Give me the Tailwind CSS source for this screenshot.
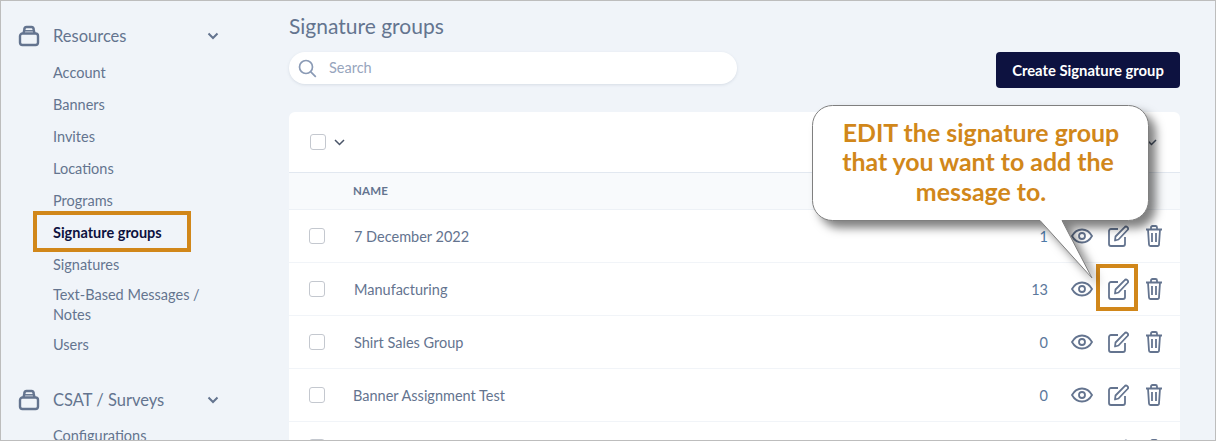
<!DOCTYPE html>
<html lang="en">
  <head>
    <meta charset="UTF-8" />
    <title>Signature groups</title>
    <script src="https://cdn.jsdelivr.net/npm/@tailwindcss/browser@4"></script>
  </head>
  <body class="bg-[#f0f4f9] font-['Lato',sans-serif] text-[#64748f] overflow-hidden">
    <div class="relative w-[1216px] h-[441px] overflow-hidden border border-[#bdbdbd] flex">
      <!-- sidebar -->
      <aside class="w-[288px] shrink-0 pl-[17px] pt-[21px]">
        <div class="flex items-center h-[28px] w-[201px]">
          <svg class="w-[22px] h-[22px]" viewBox="0 0 22 22" fill="none" stroke="#64748f" stroke-width="2.4" stroke-linejoin="round"><path d="M2 11 A2.500 2.500 0 0 1 4.500 8.500 H17.500 A2.500 2.500 0 0 1 20 11 V17.500 A2.500 2.500 0 0 1 17.500 20 H4.500 A2.500 2.500 0 0 1 2 17.500 Z"/><path d="M5.500 8.500 L6.500 3.800 A2 2 0 0 1 8.500 2 H13.500 A2 2 0 0 1 15.500 3.800 L16.500 8.500"/><path d="M6 5.800 H16" stroke-width="1.500"/></svg>
          <span class="ml-[13px] text-[16.5px] flex-1">Resources</span>
          <svg class="w-[12px] h-[8px]" viewBox="0 0 12 8" fill="none" stroke="#64748f" stroke-width="2"><path d="M1.500 1.500 6 6l4.500-4.500"/></svg>
        </div>
        <nav class="ml-[35px] mt-[7px] text-[14.5px] leading-[20px]">
          <a class="block py-[6px]">Account</a>
          <a class="block py-[6px]">Banners</a>
          <a class="block py-[6px]">Invites</a>
          <a class="block py-[6px]">Locations</a>
          <a class="block py-[6px]">Programs</a>
          <a class="block py-[6px] font-bold text-[#0d1240]">Signature groups</a>
          <a class="block py-[6px]">Signatures</a>
          <a class="block pt-[4px] pb-[5px] w-[170px]">Text-Based Messages / Notes</a>
          <a class="block py-[5px]">Users</a>
        </nav>
        <div class="flex items-center h-[28px] w-[201px] mt-[26px]">
          <svg class="w-[22px] h-[22px]" viewBox="0 0 22 22" fill="none" stroke="#64748f" stroke-width="2.4" stroke-linejoin="round"><path d="M2 11 A2.500 2.500 0 0 1 4.500 8.500 H17.500 A2.500 2.500 0 0 1 20 11 V17.500 A2.500 2.500 0 0 1 17.500 20 H4.500 A2.500 2.500 0 0 1 2 17.500 Z"/><path d="M5.500 8.500 L6.500 3.800 A2 2 0 0 1 8.500 2 H13.500 A2 2 0 0 1 15.500 3.800 L16.500 8.500"/><path d="M6 5.800 H16" stroke-width="1.500"/></svg>
          <span class="ml-[13px] text-[16.5px] flex-1">CSAT / Surveys</span>
          <svg class="w-[12px] h-[8px]" viewBox="0 0 12 8" fill="none" stroke="#64748f" stroke-width="2"><path d="M1.500 1.500 6 6l4.500-4.500"/></svg>
        </div>
        <a class="block ml-[35px] mt-[12px] text-[14.5px] leading-[20px]">Configurations</a>
      </aside>

      <!-- main -->
      <main class="w-[891px] shrink-0">
        <h1 class="text-[21px] leading-[26px] mt-[12px]">Signature groups</h1>
        <div class="flex justify-between items-start mt-[13px]">
          <div class="w-[448px] h-[32px] bg-white rounded-full shadow-[0_1px_3px_rgba(100,116,143,0.18)] flex items-center pl-[9px]">
            <svg class="w-[19px] h-[19px]" viewBox="0 0 19 19" fill="none" stroke="#8a9ab5" stroke-width="1.700"><circle cx="8" cy="8" r="6.500"/><path d="m12.800 12.800 5 5"/></svg>
            <span class="ml-[12px] text-[14.5px] text-[#97a5bd]">Search</span>
          </div>
          <button class="w-[184px] h-[36px] bg-[#0d1240] rounded-[4px] text-white text-[14.8px] font-bold">Create Signature group</button>
        </div>
        <section class="mt-[24px] bg-white rounded-t-[6px] h-[340px] overflow-hidden">
          <div class="h-[61px] flex items-center pl-[21px] pr-[23px] border-b border-[#e2e8f0]">
            <span class="w-[16px] h-[16px] border border-[#c4c8cf] rounded-[3px]"></span>
            <svg class="ml-[8px] w-[11px] h-[7px]" viewBox="0 0 11 7" fill="none" stroke="#4a5568" stroke-width="1.500"><path d="M1 1l4.500 4.500L10 1"/></svg>
            <span class="flex-1"></span>
            <svg class="w-[11px] h-[7px]" viewBox="0 0 11 7" fill="none" stroke="#4a5568" stroke-width="1.500"><path d="M1 1l4.500 4.500L10 1"/></svg>
          </div>
          <div class="h-[37px] bg-[#f8fafc] border-b border-[#edf1f6] flex items-center pl-[64px] text-[11.500px] font-bold tracking-[0.2px]">NAME</div>
          <div class="h-[53px] border-b border-[#f1f4f8] flex items-center pl-[20px] pr-[17px] text-[14.5px]">
            <span class="w-[16px] h-[16px] border border-[#c4c8cf] rounded-[3px]"></span>
            <span class="ml-[29px] pt-[2px] flex-1">7 December 2022</span>
            <span class="pt-[2px] text-[#4d7aa8]">1</span>
            <svg class="ml-[23px] w-[22px] h-[22px]" viewBox="0 0 22 22" fill="none" stroke="#64748f" stroke-width="1.800"><path d="M1 11c2.500-4.500 6-6.500 10-6.500S18.500 6.500 21 11c-2.500 4.500-6 6.500-10 6.500S3.500 15.500 1 11Z"/><circle cx="11" cy="11" r="3"/></svg>
            <svg class="ml-[15px] w-[21px] h-[22px]" viewBox="0 0 21 22" fill="none" stroke="#64748f" stroke-width="1.800" stroke-linejoin="round"><path d="M10 4H3a2 2 0 0 0-2 2v13a2 2 0 0 0 2 2h12a2 2 0 0 0 2-2v-7"/><path d="M7.500 11.500 16.500 2.300a1.800 1.800 0 0 1 3 2.700L10.500 14.500 7 15.500Z"/></svg>
            <svg class="ml-[16px] w-[18px] h-[22px]" viewBox="0 0 18 22" fill="none" stroke="#64748f" stroke-width="1.800" stroke-linejoin="round"><path d="M1 4.500h16M6 4.500V2.500a1.500 1.500 0 0 1 1.500-1.500h3A1.500 1.500 0 0 1 12 2.500v2M3 4.500l1 15a1.500 1.500 0 0 0 1.500 1.500h7a1.500 1.500 0 0 0 1.500-1.500l1-15M7 8v9M11 8v9"/></svg>
          </div>
          <div class="h-[53px] border-b border-[#f1f4f8] flex items-center pl-[20px] pr-[17px] text-[14.5px]">
            <span class="w-[16px] h-[16px] border border-[#c4c8cf] rounded-[3px]"></span>
            <span class="ml-[29px] pt-[2px] flex-1">Manufacturing</span>
            <span class="pt-[2px] text-[#5b789b]">13</span>
            <svg class="ml-[23px] w-[22px] h-[22px]" viewBox="0 0 22 22" fill="none" stroke="#64748f" stroke-width="1.800"><path d="M1 11c2.500-4.500 6-6.500 10-6.500S18.500 6.500 21 11c-2.500 4.500-6 6.500-10 6.500S3.500 15.500 1 11Z"/><circle cx="11" cy="11" r="3"/></svg>
            <svg class="ml-[15px] w-[21px] h-[22px]" viewBox="0 0 21 22" fill="none" stroke="#64748f" stroke-width="1.800" stroke-linejoin="round"><path d="M10 4H3a2 2 0 0 0-2 2v13a2 2 0 0 0 2 2h12a2 2 0 0 0 2-2v-7"/><path d="M7.500 11.500 16.500 2.300a1.800 1.800 0 0 1 3 2.700L10.500 14.500 7 15.500Z"/></svg>
            <svg class="ml-[16px] w-[18px] h-[22px]" viewBox="0 0 18 22" fill="none" stroke="#64748f" stroke-width="1.800" stroke-linejoin="round"><path d="M1 4.500h16M6 4.500V2.500a1.500 1.500 0 0 1 1.500-1.500h3A1.500 1.500 0 0 1 12 2.500v2M3 4.500l1 15a1.500 1.500 0 0 0 1.500 1.500h7a1.500 1.500 0 0 0 1.500-1.500l1-15M7 8v9M11 8v9"/></svg>
          </div>
          <div class="h-[53px] border-b border-[#f1f4f8] flex items-center pl-[20px] pr-[17px] text-[14.5px]">
            <span class="w-[16px] h-[16px] border border-[#c4c8cf] rounded-[3px]"></span>
            <span class="ml-[29px] pt-[2px] flex-1">Shirt Sales Group</span>
            <span class="pt-[2px] text-[#5b789b]">0</span>
            <svg class="ml-[23px] w-[22px] h-[22px]" viewBox="0 0 22 22" fill="none" stroke="#64748f" stroke-width="1.800"><path d="M1 11c2.500-4.500 6-6.500 10-6.500S18.500 6.500 21 11c-2.500 4.500-6 6.500-10 6.500S3.500 15.500 1 11Z"/><circle cx="11" cy="11" r="3"/></svg>
            <svg class="ml-[15px] w-[21px] h-[22px]" viewBox="0 0 21 22" fill="none" stroke="#64748f" stroke-width="1.800" stroke-linejoin="round"><path d="M10 4H3a2 2 0 0 0-2 2v13a2 2 0 0 0 2 2h12a2 2 0 0 0 2-2v-7"/><path d="M7.500 11.500 16.500 2.300a1.800 1.800 0 0 1 3 2.700L10.500 14.500 7 15.500Z"/></svg>
            <svg class="ml-[16px] w-[18px] h-[22px]" viewBox="0 0 18 22" fill="none" stroke="#64748f" stroke-width="1.800" stroke-linejoin="round"><path d="M1 4.500h16M6 4.500V2.500a1.500 1.500 0 0 1 1.500-1.500h3A1.500 1.500 0 0 1 12 2.500v2M3 4.500l1 15a1.500 1.500 0 0 0 1.500 1.500h7a1.500 1.500 0 0 0 1.500-1.500l1-15M7 8v9M11 8v9"/></svg>
          </div>
          <div class="h-[53px] border-b border-[#f1f4f8] flex items-center pl-[20px] pr-[17px] text-[14.5px]">
            <span class="w-[16px] h-[16px] border border-[#c4c8cf] rounded-[3px]"></span>
            <span class="ml-[28px] pt-[2px] flex-1">Banner Assignment Test</span>
            <span class="pt-[2px] text-[#5b789b]">0</span>
            <svg class="ml-[23px] w-[22px] h-[22px]" viewBox="0 0 22 22" fill="none" stroke="#64748f" stroke-width="1.800"><path d="M1 11c2.500-4.500 6-6.500 10-6.500S18.500 6.500 21 11c-2.500 4.500-6 6.500-10 6.500S3.500 15.500 1 11Z"/><circle cx="11" cy="11" r="3"/></svg>
            <svg class="ml-[15px] w-[21px] h-[22px]" viewBox="0 0 21 22" fill="none" stroke="#64748f" stroke-width="1.800" stroke-linejoin="round"><path d="M10 4H3a2 2 0 0 0-2 2v13a2 2 0 0 0 2 2h12a2 2 0 0 0 2-2v-7"/><path d="M7.500 11.500 16.500 2.300a1.800 1.800 0 0 1 3 2.700L10.500 14.500 7 15.500Z"/></svg>
            <svg class="ml-[16px] w-[18px] h-[22px]" viewBox="0 0 18 22" fill="none" stroke="#64748f" stroke-width="1.800" stroke-linejoin="round"><path d="M1 4.500h16M6 4.500V2.500a1.500 1.500 0 0 1 1.500-1.500h3A1.500 1.500 0 0 1 12 2.500v2M3 4.500l1 15a1.500 1.500 0 0 0 1.500 1.500h7a1.500 1.500 0 0 0 1.500-1.500l1-15M7 8v9M11 8v9"/></svg>
          </div>
          <div class="h-[53px] flex items-start pl-[20px] pr-[17px] pt-[17px]">
            <span class="w-[16px] h-[16px] border border-[#c4c8cf] rounded-[3px]"></span>
            <span class="flex-1"></span>
            <svg class="w-[22px] h-[22px]" viewBox="0 0 22 22" fill="none" stroke="#64748f" stroke-width="1.800"><path d="M1 11c2.500-4.500 6-6.500 10-6.500S18.500 6.500 21 11c-2.500 4.500-6 6.500-10 6.500S3.500 15.500 1 11Z"/><circle cx="11" cy="11" r="3"/></svg>
            <svg class="ml-[15px] w-[21px] h-[22px]" viewBox="0 0 21 22" fill="none" stroke="#64748f" stroke-width="1.800" stroke-linejoin="round"><path d="M10 4H3a2 2 0 0 0-2 2v13a2 2 0 0 0 2 2h12a2 2 0 0 0 2-2v-7"/><path d="M7.500 11.500 16.500 2.300a1.800 1.800 0 0 1 3 2.700L10.500 14.500 7 15.500Z"/></svg>
            <svg class="ml-[16px] w-[18px] h-[22px]" viewBox="0 0 18 22" fill="none" stroke="#64748f" stroke-width="1.800" stroke-linejoin="round"><path d="M1 4.500h16M6 4.500V2.500a1.500 1.500 0 0 1 1.500-1.500h3A1.500 1.500 0 0 1 12 2.500v2M3 4.500l1 15a1.500 1.500 0 0 0 1.500 1.500h7a1.500 1.500 0 0 0 1.500-1.500l1-15M7 8v9M11 8v9"/></svg>
          </div>
        </section>
      </main>

      <!-- highlights and callout lying over the page -->
      <div class="absolute left-[32px] top-[210px] w-[158px] h-[41px] border-4 border-[#d1871a]"></div>
      <div class="absolute left-[1095px] top-[263px] w-[42px] h-[47px] border-4 border-[#d1871a]"></div>
      <svg class="absolute left-[799px] top-[89px] w-[370px] h-[200px] drop-shadow-[7px_7px_5px_rgba(0,0,0,0.5)]" viewBox="0 0 370 200" fill="#fff" stroke="#7f7f7f"><path d="M32.500 15.500H328.500a20 20 0 0 1 20 20V110.500a20 20 0 0 1-20 20H262L292 188 240 130.500H32.500a20 20 0 0 1-20-20V35.500a20 20 0 0 1 20-20Z"/></svg>
      <p class="absolute left-[811px] top-[103px] w-[338px] h-[116px] flex items-center justify-center text-center font-bold text-[24.9px] leading-[29.500px] text-[#d1871a]"><span>EDIT the signature group<br />that you want to add the&nbsp;<br />message to.</span></p>
    </div>
  </body>
</html>
